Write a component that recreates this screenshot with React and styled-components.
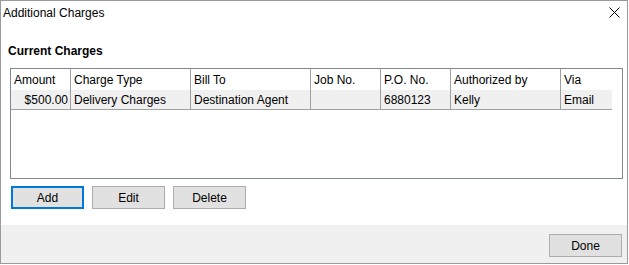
import React from "react";
import styled, { createGlobalStyle } from "styled-components";

const Global = createGlobalStyle`
  html, body { margin: 0; padding: 0; background: #fff; }
  body { font-family: "Liberation Sans", Arial, sans-serif; font-size: 12px; color: #000; }
  * { box-sizing: border-box; }
`;

const Window = styled.div`
  width: 628px;
  height: 264px;
  border: 1px solid #9a9a9a;
  display: flex;
  flex-direction: column;
  background: #fff;
`;

const TitleBar = styled.div`
  height: 24px;
  display: flex;
  align-items: center;
  justify-content: space-between;
  padding: 0 2px 0 2px;
  font-size: 12px;
`;

const Title = styled.span`
  line-height: 24px;
  margin-top: -1px;
`;

const CloseBtn = styled.div`
  width: 24px;
  height: 24px;
  display: flex;
  align-items: center;
  justify-content: center;
  margin-right: -1px;
  margin-top: -1px;
`;

const Body = styled.div`
  flex: 1;
  padding: 19px 0 0 0;
  display: flex;
  flex-direction: column;
`;

const SectionLabel = styled.div`
  font-weight: bold;
  font-size: 12px;
  line-height: 14px;
  margin-left: 7px;
`;

const Table = styled.div`
  margin: 10px 0 0 9px;
  width: 613px;
  height: 111px;
  border: 1px solid #828790;
  background: #fff;
`;

const Row = styled.div`
  display: grid;
  grid-template-columns: 60px 120px 120px 70px 70px 110px 51px;
  width: 601px;
  height: ${(p) => (p.$header ? "21px" : "20px")};
  background: ${(p) => (p.$header ? "#fff" : "#f0f0f0")};
  border-bottom: ${(p) => (p.$header ? "none" : "1px solid #a0a0a0")};
`;

const Cell = styled.div`
  border-right: ${(p) => (p.$last ? "none" : "1px solid #a0a0a0")};
  padding: 1px ${(p) => (p.$right ? "2px" : "3px")} 0 3px;
  text-align: ${(p) => (p.$right ? "right" : "left")};
  line-height: ${(p) => (p.$header ? "20px" : "18px")};
  white-space: nowrap;
  overflow: hidden;
`;

const ButtonRow = styled.div`
  display: flex;
  gap: 8px;
  margin: 7px 0 0 10px;
`;

const Button = styled.button`
  width: 73px;
  height: 23px;
  font-family: "Liberation Sans", Arial, sans-serif;
  font-size: 12px;
  color: #000;
  background: #e1e1e1;
  border: ${(p) => (p.$focused ? "2px solid #0078d7" : "1px solid #adadad")};
  padding: 0;
  margin: 0;
  line-height: 20px;
`;

const Footer = styled.div`
  height: 38px;
  background: #f0f0f0;
  display: flex;
  justify-content: flex-end;
  align-items: flex-start;
  padding: 9px 5px 0 0;
`;

const columns = ["Amount", "Charge Type", "Bill To", "Job No.", "P.O. No.", "Authorized by", "Via"];
const data = [
  { v: "$500.00", right: true },
  { v: "Delivery Charges" },
  { v: "Destination Agent" },
  { v: "" },
  { v: "6880123" },
  { v: "Kelly" },
  { v: "Email" },
];

export default function App() {
  return (
    <>
      <Global />
      <Window>
        <TitleBar>
          <Title>Additional Charges</Title>
          <CloseBtn>
            <svg width="11" height="11" viewBox="0 0 11 11">
              <path d="M0.5 0.5 L10.5 10.5 M10.5 0.5 L0.5 10.5" stroke="#000" strokeWidth="1" fill="none" />
            </svg>
          </CloseBtn>
        </TitleBar>
        <Body>
          <SectionLabel>Current Charges</SectionLabel>
          <Table>
            <Row $header>
              {columns.map((c, i) => (
                <Cell key={c} $header $last={i === columns.length - 1}>
                  {c}
                </Cell>
              ))}
            </Row>
            <Row>
              {data.map((d, i) => (
                <Cell key={i} $right={d.right} $last={i === data.length - 1}>
                  {d.v}
                </Cell>
              ))}
            </Row>
          </Table>
          <ButtonRow>
            <Button $focused>Add</Button>
            <Button>Edit</Button>
            <Button>Delete</Button>
          </ButtonRow>
        </Body>
        <Footer>
          <Button>Done</Button>
        </Footer>
      </Window>
    </>
  );
}
